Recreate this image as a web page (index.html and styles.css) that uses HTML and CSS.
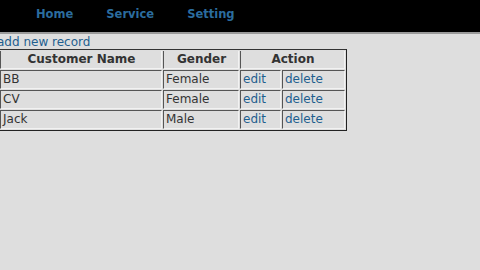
FILE: index.html
```html
<!DOCTYPE html>
<html>
<head>
<meta charset="utf-8">
<link rel="stylesheet" href="styles.css">
</head>
<body>
<div class="topbar">
  <nav class="nav">
    <a class="nav-link" href="#">Home</a>
    <a class="nav-link" href="#">Service</a>
    <a class="nav-link" href="#">Setting</a>
  </nav>
</div>
<main class="content">
  <a class="add-link" href="#">add new record</a>
  <table class="grid">
    <thead>
      <tr>
        <th class="c-name">Customer Name</th>
        <th class="c-gender">Gender</th>
        <th class="c-action" colspan="2">Action</th>
      </tr>
    </thead>
    <tbody>
      <tr><td>BB</td><td>Female</td><td class="c-edit"><a href="#">edit</a></td><td class="c-del"><a href="#">delete</a></td></tr>
      <tr><td>CV</td><td>Female</td><td class="c-edit"><a href="#">edit</a></td><td class="c-del"><a href="#">delete</a></td></tr>
      <tr><td>Jack</td><td>Male</td><td class="c-edit"><a href="#">edit</a></td><td class="c-del"><a href="#">delete</a></td></tr>
    </tbody>
  </table>
</main>
</body>
</html>
```
FILE: styles.css
```css
html, body {
  margin: 0;
  padding: 0;
}
body {
  background: #dedede;
  font-family: "DejaVu Sans", Verdana, sans-serif;
  font-size: 12px;
  color: #333;
  width: 480px;
  height: 270px;
  overflow: hidden;
}
.topbar {
  background: #000;
  height: 32px;
  border-bottom: 2px solid #9a9a9a;
}
.nav {
  display: flex;
  gap: 33px;
  padding-left: 36px;
  height: 100%;
  align-items: center;
  padding-bottom: 4px;
  box-sizing: border-box;
}
.nav-link {
  color: #2b6c9e;
  font-weight: bold;
  font-size: 11.5px;
  text-decoration: none;
}
.content {
  margin-left: -1px;
  padding-top: 1px;
}
.add-link {
  display: block;
  margin-left: -2px;
  color: #1f5f8f;
  text-decoration: none;
  font-size: 12px;
  line-height: 14px;
}
a {
  color: #1f5f8f;
  text-decoration: none;
}
.grid {
  border-collapse: separate;
  border-spacing: 1px;
  border: 1px solid #222;
  border-left: none;
  border-top: 1px solid #333;
  margin-top: 0;
}
.grid th, .grid td {
  border-top: 1px solid #555;
  border-left: 1px solid #555;
  border-bottom: 1px solid #f2f2f2;
  border-right: 1px solid #f2f2f2;
  padding: 0 1px 0 2px;
  height: 17px;
  line-height: 15px;
  text-align: left;
  font-weight: normal;
}
.grid th {
  text-align: center;
  font-weight: bold;
  color: #333;
}
.grid tr:first-child th {
  border-top: none;
}
.c-name { width: 157px; }
.c-gender { width: 71px; }
.c-edit { width: 36px; }
.c-del { width: 58px; }
```
